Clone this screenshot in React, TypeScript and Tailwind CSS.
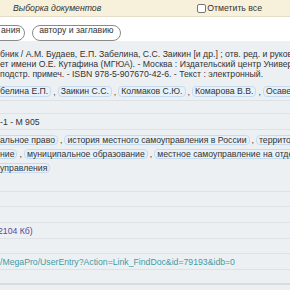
export default function App() {
  const authors = ["белина Е.П.", "Заикин С.С.", "Колмаков С.Ю.", "Комарова В.В.", "Осавелюк А.М."];
  const subjects = [
    ["альное право", "история местного самоуправления в России", "территориальные основы"],
    ["ние", "муниципальное образование", "местное самоуправление на отдельных территориях"],
    ["управления"],
  ];

  const tag = "shrink-0 rounded-[4px] border border-[#c6dcee] bg-[#e7f1fa] px-[2px] leading-[8px]";

  return (
    <div className="h-[290px] w-[290px] overflow-hidden bg-white font-['Liberation_Sans',Arial,sans-serif] text-[8.7px] leading-[10px] text-[#333]">
      <div className="flex h-[17px] items-center border-b border-[#e3ddc9] bg-[#f7f1db]">
        <span className="ml-[13px] italic">Выборка документов</span>
        <label className="ml-auto mr-[28px] flex items-center gap-[1px]">
          <span className="h-[9px] w-[9px] rounded-[2px] border border-[#767676] bg-white" />
          <span>Отметить все</span>
        </label>
      </div>

      <div className="flex h-[24px] gap-[7px] whitespace-nowrap pt-[8px]">
        <span className="ml-[-8px] rounded-full border border-[#8a8a8a] bg-white pl-[8px] pr-[4px] leading-[8px]">ания</span>
        <span className="rounded-full border border-[#8a8a8a] bg-white px-[6px] leading-[8px]">автору и заглавию</span>
      </div>

      <div className="flex flex-col bg-[#edf0f3]">
        <div className="h-[60px] overflow-hidden whitespace-nowrap border-b border-[#dde2e6] pt-[8px]">
          <div>бник / А.М. Будаев, Е.П. Забелина, С.С. Заикин [и др.] ; отв. ред. и руководитель авт. коллектива</div>
          <div>ет имени О.Е. Кутафина (МГЮА). - Москва : Издательский центр Университета</div>
          <div>подстр. примеч. - ISBN 978-5-907670-42-6. - Текст : электронный.</div>
          <div className="ml-[-3px] mt-[7px] flex items-center">
            {authors.map((a, i) => (
              <div key={a} className="flex shrink-0 items-center">
                {i > 0 && <span className="mx-[2px]">,</span>}
                <span className={tag + " leading-[9px]"}>{a}</span>
              </div>
            ))}
          </div>
        </div>

        <div className="h-[13px] border-b border-[#dde2e6]" />

        <div className="flex h-[16px] items-center border-b border-[#dde2e6]">-1 - М 905</div>

        <div className="flex h-[62px] flex-col gap-[4px] overflow-hidden border-b border-[#dde2e6] pt-[5px] whitespace-nowrap">
          {subjects.map((line, j) => (
            <div key={j} className="ml-[-3px] flex items-center">
              {line.map((s, i) => (
                <div key={s} className="flex shrink-0 items-center">
                  {i > 0 && <span className="mx-[2px]">,</span>}
                  <span className={tag}>{s}</span>
                </div>
              ))}
            </div>
          ))}
        </div>

        <div className="h-[15px] border-b border-[#dde2e6]" />
        <div className="h-[16px] border-b border-[#dde2e6]" />
        <div className="flex h-[16px] items-center border-b border-[#dde2e6] text-[#56479a]">
          <span className="ml-[-2px]">2104 Кб)</span>
        </div>
        <div className="h-[15px] border-b border-[#dde2e6]" />
        <div className="flex h-[16px] items-center border-b border-[#dde2e6] text-[#3f9ca4]">
          /MegaPro/UserEntry?Action=Link_FindDoc&amp;id=79193&amp;idb=0
        </div>
        <div className="h-[15px] border-b-2 border-[#d7dcdf]" />
        <div className="h-[10px]" />
      </div>
    </div>
  );
}
